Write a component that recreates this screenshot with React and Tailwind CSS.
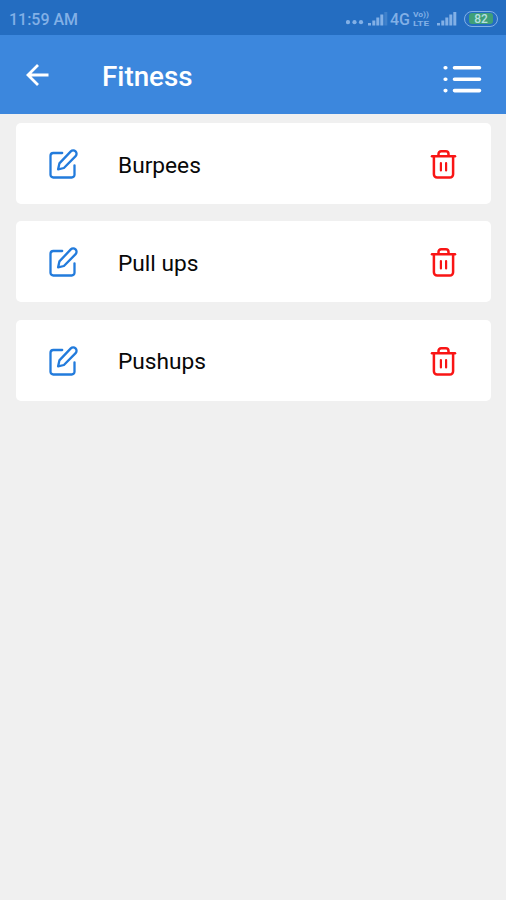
import React from "react";

const exercises = ["Burpees", "Pull ups", "Pushups"];

function Signal({ dim }) {
  return (
    <svg width="20" height="15" viewBox="0 0 20 15" fill="currentColor">
      <rect x="0" y="12" width="3" height="2.5" />
      <rect x="4.3" y="9.5" width="3" height="5" />
      <rect x="8.3" y="6.5" width="3" height="8" />
      <rect x="12.3" y="3.5" width="3" height="11" />
      <rect x="16.3" y="1" width="3" height="13.5" opacity={dim ? 0.3 : 1} />
    </svg>
  );
}

function StatusBar() {
  return (
    <div className="flex h-[35.4px] items-center bg-[#246dc1] pl-[9px] pr-[8px] pt-[2px] text-[#82b0e6]">
      <span className="w-[80px] whitespace-nowrap text-[16px] font-medium leading-none">
        <svg className="block overflow-visible" width="70" height="16">
          <text x="0" y="14" textLength="69" lengthAdjust="spacingAndGlyphs" fill="currentColor">11:59 AM</text>
        </svg>
      </span>
      <div className="ml-auto flex items-center">
        <svg className="mt-[8px]" width="18" height="5" viewBox="0 0 18 5" fill="currentColor">
          <circle cx="2" cy="2.2" r="2.1" />
          <circle cx="8.5" cy="2.2" r="2.1" />
          <circle cx="15" cy="2.2" r="2.1" />
        </svg>
        <span className="ml-[4px]"><Signal dim /></span>
        <svg className="ml-[2px] block" width="43" height="18" fill="currentColor">
          <text x="0" y="15" fontSize="16" fontWeight="500" textLength="20" lengthAdjust="spacingAndGlyphs">4G</text>
          <text x="23" y="7.4" fontSize="7.5" fontWeight="700" textLength="16" lengthAdjust="spacingAndGlyphs">Vo))</text>
          <text x="23" y="16.2" fontSize="8" fontWeight="700" textLength="16" lengthAdjust="spacingAndGlyphs">LTE</text>
        </svg>
        <span className="ml-[4px]"><Signal /></span>
        <span className="ml-[7px] flex h-[16px] w-[34px] items-center justify-center rounded-full border-[1.5px] border-[#82b0e6]">
          <span className="flex h-[11px] w-[24px] items-center justify-center rounded-[3px] bg-[#3f9f78] text-[12px] font-medium leading-none text-[#b5dfe0]">82</span>
        </span>
      </div>
    </div>
  );
}

function EditIcon() {
  return (
    <svg className="mt-[2px]" width="33" height="33" viewBox="0 0 33 33" fill="none" stroke="#227bdc" strokeWidth="2.3" strokeLinecap="round" strokeLinejoin="round">
      <path d="M15.2 5H6.3A2.8 2.8 0 0 0 3.5 7.8v18.9a2.8 2.8 0 0 0 2.8 2.8h18.4a2.8 2.8 0 0 0 2.8-2.8v-9.4" />
      <path d="M23.8 3.4a3.2 3.2 0 0 1 4.8 4.7L16.9 20l-5.8 1.3 1.3-5.9Z" />
    </svg>
  );
}

function TrashIcon() {
  return (
    <svg className="mt-[2px] block" width="30" height="33" viewBox="0 0 30 33" fill="none" stroke="#f91515" strokeWidth="2.5" strokeLinecap="round" strokeLinejoin="round">
      <path d="M4 8.2h23" />
      <path d="M5.9 8.5v17.8a3.2 3.2 0 0 0 3.2 3.2h12.8a3.2 3.2 0 0 0 3.2-3.2V8.5" />
      <path d="M10.5 7.8V6.2A2.7 2.7 0 0 1 13.2 3.2h4.6a2.7 2.7 0 0 1 2.7 2.7v1.9" />
      <path d="M12.9 15v7.5M18.1 15v7.5" strokeWidth="2.2" />
    </svg>
  );
}

export default function App() {
  return (
    <div className="h-[900px] w-[506px] overflow-hidden bg-[#f0f0f0] font-[Roboto,sans-serif]">
      <StatusBar />
      <header className="flex h-[78.6px] items-center bg-[#3c87dd] pl-[26px] pr-[24px] text-white">
        <svg width="24" height="24" viewBox="0 0 24 24" fill="none" stroke="currentColor" strokeWidth="2.8" className="mt-[1px]">
          <path d="M22.5 12H2M12 2 2 12l10 10" />
        </svg>
        <h1 className="ml-[52px] mt-[5px] text-[27.8px] font-medium leading-none">Fitness</h1>
        <svg className="ml-auto mt-[8px]" width="39" height="30" viewBox="0 0 39 30" fill="none" stroke="currentColor" strokeLinecap="round" strokeWidth="3.6">
          <path d="M11.5 3.8H36.5M11.5 15.2H36.5M11.5 26.6H36.5" />
          <path d="M2.2 3.8h.6M2.2 15.2h.6M2.2 26.6h.6" />
        </svg>
      </header>
      <main className="flex flex-col gap-[17.4px] pl-[16px] pr-[15px] pt-[9px]">
        {exercises.map((name) => (
          <div key={name} className="flex h-[81px] items-center rounded-[5px] bg-white pl-[31px] pr-[33px]">
            <EditIcon />
            <span className="ml-[38px] mt-[5px] text-[22.7px] leading-none text-[#080808]">{name}</span>
            <span className="ml-auto"><TrashIcon /></span>
          </div>
        ))}
      </main>
    </div>
  );
}
